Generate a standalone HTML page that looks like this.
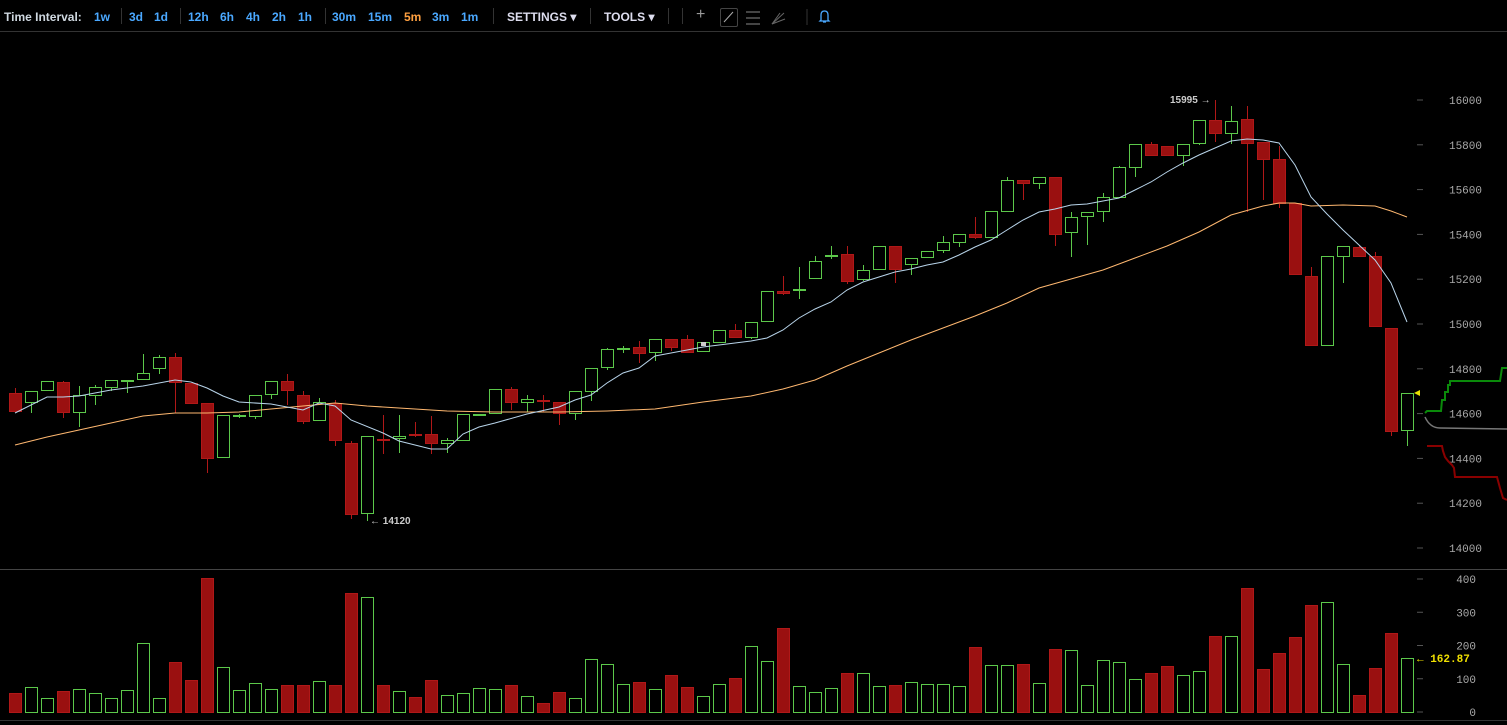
<!DOCTYPE html>
<html><head><meta charset="utf-8"><style>
html,body{margin:0;padding:0;background:#000;width:1507px;height:725px;overflow:hidden}
#tb{position:absolute;left:0;top:0;width:1507px;height:31px;border-bottom:1px solid #333;font:bold 12px "Liberation Sans",sans-serif;color:#ddd}
#tb span{position:absolute;top:10px}
.b{color:#4aa8ff}.o{color:#ffa040}
.sep{position:absolute;top:8px;width:1px;height:16px;background:#333}
svg{position:absolute;left:0;top:0}
</style></head><body>
<div id="tb">
<span style="left:4px;color:#cfd8e0">Time Interval:</span>
<span class="b" style="left:94px">1w</span>
<div class="sep" style="left:121px"></div>
<span class="b" style="left:129px">3d</span><span class="b" style="left:154px">1d</span>
<div class="sep" style="left:180px"></div>
<span class="b" style="left:188px">12h</span><span class="b" style="left:220px">6h</span><span class="b" style="left:246px">4h</span><span class="b" style="left:272px">2h</span><span class="b" style="left:298px">1h</span>
<div class="sep" style="left:325px"></div>
<span class="b" style="left:332px">30m</span><span class="b" style="left:368px">15m</span><span class="o" style="left:404px">5m</span><span class="b" style="left:432px">3m</span><span class="b" style="left:461px">1m</span>
<div class="sep" style="left:493px"></div>
<span style="left:507px;color:#dde">SETTINGS ▾</span>
<div class="sep" style="left:590px"></div>
<span style="left:604px;color:#dde">TOOLS ▾</span>
<div class="sep" style="left:668px"></div>
<div class="sep" style="left:682px"></div>
<span style="left:696px;top:6px;color:#999;font-size:16px;font-weight:normal">+</span>
<div style="position:absolute;left:720px;top:8px;width:16px;height:17px;border:1px solid #444;border-radius:2px"></div>
<svg width="1507" height="31" style="position:absolute;left:0;top:0">
<line x1="724" y1="22" x2="733" y2="12" stroke="#aaa"/>
<g stroke="#888"><line x1="746" y1="12" x2="760" y2="12"/><line x1="746" y1="18" x2="760" y2="18"/><line x1="746" y1="24" x2="760" y2="24"/></g>
<g stroke="#666"><line x1="772" y1="24" x2="784" y2="13"/><line x1="772" y1="24" x2="780" y2="13"/><line x1="772" y1="24" x2="785" y2="19"/></g>
<line x1="807" y1="9" x2="807" y2="25" stroke="#333"/>
<path d="M820 21 L821 20 L821 15 Q821 11 824.5 11 Q828 11 828 15 L828 20 L829 21 Z M823 22 L826 22" fill="none" stroke="#4aa8ff" stroke-width="1.3"/>
</svg>
</div>
<svg id="c" width="1507" height="725"></svg>
<script>
var C=[[393,411,388,411,0],[391,402,391,413,1],[381,390,381,390,1],[382,412,381,418,0],[395,412,386,427,1],[387,395,385,405,1],[380,387,380,391,1],[380,381,380,393,1],[373,379,354,379,1],[357,368,355,374,1],[357,382,353,413,0],[383,403,383,403,0],[403,458,403,473,0],[415,457,415,457,1],[415,416,414,418,1],[395,416,395,419,1],[381,394,381,399,1],[381,390,374,405,0],[395,421,391,424,0],[402,420,398,420,1],[403,440,400,446,0],[443,514,441,519,0],[436,513,436,521,1],[439,440,415,454,0],[436,438,415,453,1],[434,435,422,437,0],[434,443,416,454,0],[440,443,438,453,1],[414,440,414,440,1],[414,415,414,415,1],[389,413,389,413,1],[389,402,387,410,0],[399,402,395,412,1],[400,401,395,412,0],[402,413,402,425,0],[391,413,391,420,1],[368,391,368,401,1],[349,367,348,370,1],[348,349,346,353,1],[347,353,341,363,0],[339,352,339,361,1],[339,347,339,351,0],[339,352,335,353,0],[342,351,342,351,1],[330,342,330,342,1],[330,337,324,337,0],[322,337,322,339,1],[291,321,291,321,1],[291,293,276,295,0],[289,290,267,299,1],[261,278,256,279,1],[255,256,246,259,1],[254,281,246,284,0],[270,279,265,281,1],[246,269,246,269,1],[246,269,246,283,0],[258,264,258,275,1],[251,257,251,257,1],[242,250,236,253,1],[234,242,234,247,1],[234,237,217,239,0],[211,237,211,237,1],[180,211,177,211,1],[180,183,180,200,0],[177,183,177,189,1],[177,234,177,246,0],[217,232,212,257,1],[212,216,212,245,1],[197,211,193,222,1],[167,197,166,197,1],[144,167,144,177,1],[144,155,142,155,0],[146,155,146,155,0],[144,155,144,166,1],[120,143,120,145,1],[120,133,100,142,0],[121,133,106,144,1],[119,143,106,212,0],[142,159,142,200,0],[159,203,146,208,0],[203,274,203,274,0],[276,345,267,345,0],[256,345,256,345,1],[246,256,246,283,1],[247,256,245,256,0],[256,326,252,326,0],[328,431,328,436,0],[393,430,393,446,1]];
var V=[693,687,698,691,689,693,698,690,643,698,662,680,578,667,690,683,689,685,685,681,685,593,597,685,691,697,680,695,693,688,689,685,696,703,692,698,659,664,684,682,689,675,687,696,684,678,646,661,628,686,692,688,673,673,686,685,682,684,684,686,647,665,665,664,683,649,650,685,660,662,679,673,666,675,671,636,636,588,669,653,637,605,602,664,695,668,633,658];
var s='',G='#5cc84a',R='#b01818',RF='#9a1010';
s+='<line x1="0" y1="569.5" x2="1507" y2="569.5" stroke="#444"/><line x1="0" y1="720.5" x2="1507" y2="720.5" stroke="#333"/>';
var W=[[15,413],[47,397],[63,397],[79,396],[111,390],[143,386],[175,380],[191,382],[207,388],[223,396],[239,402],[271,404],[303,410],[319,403],[335,406],[351,420],[383,433],[399,441],[431,449],[447,449],[463,434],[479,427],[495,423],[527,414],[559,407],[575,400],[591,395],[607,383],[623,373],[639,368],[655,356],[671,353],[703,347],[735,343],[751,341],[767,338],[783,330],[799,318],[815,309],[831,302],[847,290],[863,282],[879,277],[895,272],[911,269],[927,265],[943,262],[959,255],[975,247],[991,240],[1007,230],[1023,220],[1039,212],[1055,209],[1071,205],[1087,204],[1103,201],[1119,198],[1135,190],[1151,182],[1167,172],[1183,163],[1199,155],[1215,148],[1231,141],[1247,139],[1263,140],[1279,143],[1295,165],[1311,197],[1327,214],[1343,230],[1359,245],[1375,260],[1391,283],[1407,322]];
var O=[[15,445],[47,437],[79,430],[111,423],[143,416],[175,413],[207,413],[239,412],[271,409],[303,406],[335,403],[367,406],[399,408],[447,411],[495,412],[559,412],[607,411],[655,409],[703,402],[751,396],[783,389],[815,380],[847,366],[879,353],[911,340],[943,328],[975,316],[1007,303],[1039,288],[1071,279],[1103,270],[1135,258],[1167,246],[1199,232],[1231,215],[1263,206],[1279,203],[1295,203],[1311,206],[1343,205],[1375,206],[1391,211],[1407,217]];
for(var i=0;i<C.length;i++){var c=C[i],x=15+16*i,col=c[4]?G:R;
s+='<line x1="'+(x+.5)+'" y1="'+c[2]+'" x2="'+(x+.5)+'" y2="'+c[3]+'" stroke="'+col+'"/>';
var h=Math.max(c[1]-c[0],1);
s+='<rect x="'+(x-5.5)+'" y="'+(c[0]+.5)+'" width="12" height="'+h+'" fill="'+(c[4]?'#000':RF)+'" stroke="'+col+'"/>';
s+='<rect x="'+(x-5.5)+'" y="'+(V[i]+.5)+'" width="12" height="'+(712-V[i])+'" fill="'+(c[4]?'#000':RF)+'" stroke="'+col+'"/>';}
function pl(a,col){return '<polyline points="'+a.map(function(p){return p.join(',')}).join(' ')+'" fill="none" stroke="'+col+'" stroke-width="1"/>';}
s+=pl(O,'#ffb870')+pl(W,'#b8d4ea');
var lf='font-family="Liberation Mono,DejaVu Sans Mono,monospace" font-size="11"';
var pr=[16000,15800,15600,15400,15200,15000,14800,14600,14400,14200,14000];
for(var k=0;k<pr.length;k++){var y=100+k*44.8;s+='<line x1="1417" y1="'+y+'" x2="1423" y2="'+y+'" stroke="#555"/><text x="1482" y="'+(y+4)+'" text-anchor="end" fill="#aaa" '+lf+'>'+pr[k]+'</text>';}
var vl=[400,300,200,100,0];
for(k=0;k<5;k++){var y=579+k*33.25;s+='<line x1="1417" y1="'+y+'" x2="1423" y2="'+y+'" stroke="#555"/><text x="1476" y="'+(y+4)+'" text-anchor="end" fill="#aaa" '+lf+'>'+vl[k]+'</text>';}
s+='<polyline points="1425,413 1427,411 1441,411 1442,400 1445,400 1445,392 1448,392 1448,385 1450,385 1450,381 1500,381 1502,368 1507,368" fill="none" stroke="#0a8a0a" stroke-width="2"/>';
s+='<path d="M1425,417 Q1430,428 1440,428 L1507,429" fill="none" stroke="#777" stroke-width="1.5"/>';
s+='<polyline points="1427,446 1442,446 1443,451 1445,457 1448,461 1452,465 1454,468 1455,477 1497,477 1500,488 1503,498 1507,500" fill="none" stroke="#8a0000" stroke-width="2"/>';
s+='<polygon points="1414,393 1420,390 1420,396" fill="#e8e000"/>';
s+='<text x="1417" y="662" fill="#f0e000" font-weight="bold" '+lf+'>← 162.87</text>';
s+='<text x="1170" y="103" fill="#ccc" font-family="Liberation Sans,sans-serif" font-weight="bold" font-size="10">15995 →</text>';
s+='<text x="370" y="524" fill="#ccc" font-family="Liberation Sans,sans-serif" font-weight="bold" font-size="10">← 14120</text>';
s+='<rect x="701" y="342" width="5" height="4" fill="#ccc"/>';
document.getElementById('c').innerHTML=s;
</script>
</body></html>
